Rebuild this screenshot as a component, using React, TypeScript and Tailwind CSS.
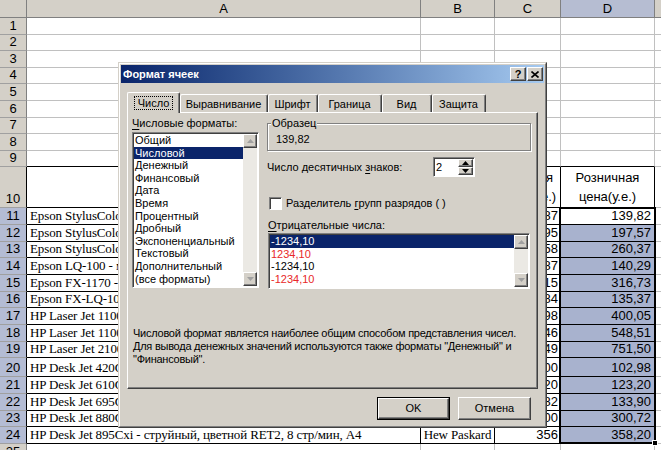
import React from 'react';

type Kind = 'plain' | 'top' | 'head' | 'data';

interface Row {
  n: string;
  h: string;
  kind: Kind;
  a?: string;
  b?: string;
  c?: string;
  d?: string;
}

const rows: Row[] = [
  { n: '1', h: 'h-[17px]', kind: 'plain' },
  { n: '2', h: 'h-[16px]', kind: 'plain' },
  { n: '3', h: 'h-[17px]', kind: 'plain' },
  { n: '4', h: 'h-[16px]', kind: 'plain' },
  { n: '5', h: 'h-[17px]', kind: 'plain' },
  { n: '6', h: 'h-[17px]', kind: 'plain' },
  { n: '7', h: 'h-[16px]', kind: 'plain' },
  { n: '8', h: 'h-[17px]', kind: 'plain' },
  { n: '9', h: 'h-[16px]', kind: 'top' },
  { n: '10', h: 'h-[41px]', kind: 'head', a: 'Наименование товара', b: 'Фирма', c: 'Оптовая цена(у.е.)', d: 'Розничная цена(у.е.)' },
  { n: '11', h: 'h-[17px]', kind: 'data', a: 'Epson StylusColor 440 - струйный, цветной, A4', b: 'Epson', c: '116,87', d: '139,82' },
  { n: '12', h: 'h-[17px]', kind: 'data', a: 'Epson StylusColor 640 - струйный, цветной, A4', b: 'Epson', c: '164,95', d: '197,57' },
  { n: '13', h: 'h-[16px]', kind: 'data', a: 'Epson StylusColor 740 - струйный, цветной, A4', b: 'Epson', c: '216,58', d: '260,37' },
  { n: '14', h: 'h-[17px]', kind: 'data', a: 'Epson LQ-100 - матричный, 24 иглы, A4', b: 'Epson', c: '116,87', d: '140,29' },
  { n: '15', h: 'h-[17px]', kind: 'data', a: 'Epson FX-1170 - матричный, 9 игл, A3', b: 'Epson', c: '263,15', d: '316,73' },
  { n: '16', h: 'h-[16px]', kind: 'data', a: 'Epson FX-LQ-100 - матричный, A4', b: 'Epson', c: '112,84', d: '135,37' },
  { n: '17', h: 'h-[17px]', kind: 'data', a: 'HP Laser Jet 1100 - лазерный, 8 стр/мин, A4', b: 'Hew Paskard', c: '333,98', d: '400,05' },
  { n: '18', h: 'h-[17px]', kind: 'data', a: 'HP Laser Jet 1100A - лазерный, 8 стр/мин, A4', b: 'Hew Paskard', c: '456,46', d: '548,51' },
  { n: '19', h: 'h-[16px]', kind: 'data', a: 'HP Laser Jet 2100 - лазерный, 10 стр/мин, A4', b: 'Hew Paskard', c: '624,49', d: '751,50' },
  { n: '20', h: 'h-[19px]', kind: 'data', a: 'HP Desk Jet 420C - струйный, цветной, A4', b: 'Hew Paskard', c: '85,00', d: '102,98' },
  { n: '21', h: 'h-[17px]', kind: 'data', a: 'HP Desk Jet 610C - струйный, цветной, A4', b: 'Hew Paskard', c: '102,20', d: '123,20' },
  { n: '22', h: 'h-[17px]', kind: 'data', a: 'HP Desk Jet 695C - струйный, цветной, A4', b: 'Hew Paskard', c: '111,82', d: '133,90' },
  { n: '23', h: 'h-[16px]', kind: 'data', a: 'HP Desk Jet 880C - струйный, цветной, A4', b: 'Hew Paskard', c: '249,00', d: '300,72' },
  { n: '24', h: 'h-[17px]', kind: 'data', a: 'HP Desk Jet 895Cxi - струйный, цветной RET2, 8 стр/мин, A4', b: 'Hew Paskard', c: '356', d: '358,20' },
  { n: '25', h: 'h-[17px]', kind: 'plain' },
];

const FORMATS = [
  'Общий',
  'Числовой',
  'Денежный',
  'Финансовый',
  'Дата',
  'Время',
  'Процентный',
  'Дробный',
  'Экспоненциальный',
  'Текстовый',
  'Дополнительный',
  '(все форматы)',
];

const NEGATIVES = [
  { text: '-1234,10', cls: 'bg-[#0a246a] text-white' },
  { text: '1234,10', cls: 'text-[#e82828]' },
  { text: '-1234,10', cls: 'text-black' },
  { text: '-1234,10', cls: 'text-[#e82828]' },
];

const TABS = [
  { label: 'Выравнивание', w: 'w-[88px]' },
  { label: 'Шрифт', w: 'w-[50px]' },
  { label: 'Граница', w: 'w-[64px]' },
  { label: 'Вид', w: 'w-[50px]' },
  { label: 'Защита', w: 'w-[54px]' },
];

const raised =
  'border border-t-white border-l-white border-r-[#404040] border-b-[#404040] shadow-[inset_-1px_-1px_0_#808080] bg-[#d4d0c8]';
const sunken =
  'border border-t-[#808080] border-l-[#808080] border-r-white border-b-white shadow-[inset_1px_1px_0_#404040]';

function SheetRow({ row }: { row: Row }) {
  const table = row.kind === 'head' || row.kind === 'data';
  const line = table
    ? 'border-r border-b border-black'
    : row.kind === 'top'
      ? 'border-r border-b border-r-[#c0c0c0] border-b-black'
      : 'border-r border-b border-[#c0c0c0]';
  const selected = row.kind === 'data';
  const active = row.n === '11';

  return (
    <div className={`flex shrink-0 ${row.h}`}>
      <div
        className={`flex w-[27px] shrink-0 items-end justify-center border-r border-b border-b-[#a0a0a0] text-[13px] leading-[16px] ${
          table ? 'border-r-black' : 'border-r-[#808080]'
        } ${selected ? 'bg-[#b4bcd4]' : 'bg-[#d4d0c8]'}`}
      >
        {row.n}
      </div>

      {row.kind === 'head' ? (
        <>
          <div className={`flex w-[394px] shrink-0 items-center justify-center text-center text-[13px] leading-[19px] ${line}`}>
            {row.a}
          </div>
          <div className={`flex w-[74px] shrink-0 items-center justify-center text-center text-[13px] leading-[19px] ${line}`}>
            {row.b}
          </div>
          <div className={`flex w-[66px] shrink-0 items-center justify-center text-center text-[13px] leading-[19px] ${line}`}>
            {row.c}
          </div>
          <div className={`flex w-[94px] shrink-0 items-center justify-center text-center text-[13px] leading-[19px] ${line}`}>
            {row.d}
          </div>
        </>
      ) : (
        <>
          <div
            className={`flex w-[394px] shrink-0 items-end overflow-hidden whitespace-nowrap pl-[3px] font-['Liberation_Serif','Times_New_Roman',serif] text-[13px] leading-[16px] tracking-[-0.12px] ${line}`}
          >
            {row.a}
          </div>
          <div
            className={`flex w-[74px] shrink-0 items-end justify-center overflow-hidden whitespace-nowrap font-['Liberation_Serif','Times_New_Roman',serif] text-[13px] leading-[16px] tracking-[-0.12px] ${line}`}
          >
            {row.b}
          </div>
          <div className={`flex w-[66px] shrink-0 items-end justify-end pr-[2px] text-[13px] leading-[16px] ${line}`}>
            {row.c}
          </div>
          <div
            className={`flex w-[94px] shrink-0 items-end justify-end pr-[3px] text-[13px] leading-[16px] ${line} ${
              selected && !active ? 'bg-[#a8b2ce]' : ''
            }`}
          >
            {row.d}
          </div>
        </>
      )}
      <div className="flex-1 border-b border-[#c0c0c0]" />
    </div>
  );
}

function Sheet() {
  return (
    <div className="flex flex-col">
      <div className="flex h-[18px] shrink-0 text-[13px] leading-[17px]">
        <div className="w-[27px] shrink-0 border-r border-b border-[#808080] bg-[#d4d0c8]" />
        <div className="w-[394px] shrink-0 border-r border-b border-[#808080] bg-[#d4d0c8] text-center">A</div>
        <div className="w-[74px] shrink-0 border-r border-b border-[#808080] bg-[#d4d0c8] text-center">B</div>
        <div className="w-[66px] shrink-0 border-r border-b border-[#808080] bg-[#d4d0c8] text-center">C</div>
        <div className="w-[94px] shrink-0 border-r border-b border-[#808080] bg-[#b6bdd2] text-center">D</div>
        <div className="flex-1 border-b border-[#808080] bg-[#d4d0c8]" />
      </div>
      {rows.map((r) => (
        <SheetRow key={r.n} row={r} />
      ))}
    </div>
  );
}

function Arrow({ down, color }: { down?: boolean; color: string }) {
  return (
    <svg width="7" height="4" viewBox="0 0 7 4">
      <polygon points={down ? '0,0 7,0 3.5,4' : '0,4 7,4 3.5,0'} fill={color} />
    </svg>
  );
}

function ScrollBar() {
  return (
    <div className="flex w-[14px] shrink-0 flex-col">
      <div className={`flex h-[14px] shrink-0 items-center justify-center ${raised}`}>
        <Arrow color="#a0a0a0" />
      </div>
      <div className="flex-1 bg-[#ebe9e4]" />
      <div className={`flex h-[14px] shrink-0 items-center justify-center ${raised}`}>
        <Arrow down color="#a0a0a0" />
      </div>
    </div>
  );
}

function TitleBar() {
  return (
    <div className="flex h-[18px] shrink-0 items-center bg-gradient-to-r from-[#0a246a] to-[#a6caf0] pl-[2px] pr-[1px]">
      <span className="flex-1 font-bold text-white">Формат ячеек</span>
      <div className="flex gap-[1px]">
        <div className={`flex h-[14px] w-[16px] items-center justify-center text-[11px] font-bold leading-none ${raised}`}>
          ?
        </div>
        <div className={`flex h-[14px] w-[16px] items-center justify-center ${raised}`}>
          <svg width="8" height="7" viewBox="0 0 8 7">
            <path d="M0.5 0.5 L7.5 6.5 M7.5 0.5 L0.5 6.5" stroke="#000" strokeWidth="1.6" />
          </svg>
        </div>
      </div>
    </div>
  );
}

function Tabs() {
  return (
    <div className="ml-[6px] mt-[9px] flex h-[20px] shrink-0 items-end">
      <div className="relative z-10 -mb-px flex h-[21px] w-[53px] items-start justify-center rounded-t-[2px] border-t border-l border-r border-t-white border-l-white border-r-[#404040] bg-[#d4d0c8] pt-[3px] shadow-[inset_-1px_0_0_#808080]">
        <span className="border border-dotted border-black px-[3px] leading-[12px]">Число</span>
      </div>
      {TABS.map((t) => (
        <div
          key={t.label}
          className={`flex h-[18px] ${t.w} shrink-0 items-start justify-center rounded-t-[2px] border-t border-r border-t-white border-r-[#404040] bg-[#d4d0c8] pt-[3px] shadow-[inset_-1px_0_0_#808080,inset_1px_0_0_white]`}
        >
          {t.label}
        </div>
      ))}
    </div>
  );
}

function Panel() {
  return (
    <div className="ml-[6px] flex h-[277px] w-[411px] shrink-0 flex-col border border-t-white border-l-white border-r-[#404040] border-b-[#404040] pl-[4px] pt-[4px] shadow-[inset_-1px_-1px_0_#808080]">
      <div className="flex">
        {/* format list */}
        <div className="flex w-[127px] shrink-0 flex-col">
          <div className="h-[15px]">
            <u className="underline-offset-2">Ч</u>исловые форматы:
          </div>
          <div className={`h-[156px] ${sunken} bg-white p-px`}>
            <div className="flex h-full">
              <div className="flex flex-1 flex-col">
                {FORMATS.map((f, i) => (
                  <div
                    key={f}
                    className={`h-[12.6px] whitespace-nowrap pl-[1px] leading-[12.6px] ${
                      i === 1 ? 'bg-[#0a246a] text-white' : ''
                    }`}
                  >
                    {f}
                  </div>
                ))}
              </div>
              <ScrollBar />
            </div>
          </div>
        </div>

        {/* right side */}
        <div className="ml-[8px] flex w-[264px] shrink-0 flex-col">
          <div className="mt-[6px] h-[28px] border border-[#808080] pl-[3px] shadow-[inset_1px_1px_0_white,1px_1px_0_white]">
            <div className="-mt-[7px] w-fit bg-[#d4d0c8] px-[1px]">Образец</div>
            <div className="mt-[3px] pl-[5px]">139,82</div>
          </div>

          <div className="mt-[6px] flex h-[20px] items-center">
            <div className="w-[166px] shrink-0">
              Число десятичных <u className="underline-offset-2">з</u>наков:
            </div>
            <div className={`flex h-[20px] w-[42px] shrink-0 bg-white ${sunken} p-px`}>
              <div className="flex-1 pl-[1px] leading-[16px]">2</div>
              <div className="flex w-[15px] flex-col">
                <div className={`flex h-[8px] items-center justify-center ${raised}`}>
                  <Arrow color="#000" />
                </div>
                <div className={`flex h-[8px] items-center justify-center ${raised}`}>
                  <Arrow down color="#000" />
                </div>
              </div>
            </div>
          </div>

          <div className="mt-[20px] flex h-[13px] items-center">
            <div className={`ml-[2px] h-[13px] w-[13px] shrink-0 bg-white ${sunken}`} />
            <div className="ml-[4px]">
              Разделитель <u className="underline-offset-2">г</u>рупп разрядов ( )
            </div>
          </div>

          <div className="ml-[1px] mt-[9px] h-[13px]">
            <u className="underline-offset-2">О</u>трицательные числа:
          </div>

          <div className={`ml-[1px] mt-[1px] h-[56px] w-[262px] ${sunken} bg-white p-px`}>
            <div className="flex h-full">
              <div className="flex flex-1 flex-col">
                {NEGATIVES.map((n, i) => (
                  <div key={i} className={`h-[12.6px] pl-[1px] leading-[12.6px] ${n.cls}`}>
                    {n.text}
                  </div>
                ))}
              </div>
              <ScrollBar />
            </div>
          </div>
        </div>
      </div>

      <p className="mt-[38px] pl-[1px] leading-[13px] tracking-[-0.25px]">
        Числовой формат является наиболее общим способом представления чисел.
        <br />
        Для вывода денежных значений используются также форматы "Денежный" и
        <br />
        "Финансовый".
      </p>
    </div>
  );
}

function FormatDialog() {
  return (
    <div className="absolute left-[118px] top-[62px] h-[366px] w-[429px] border border-t-[#d4d0c8] border-l-[#d4d0c8] border-r-[#404040] border-b-[#404040] text-[11px] leading-[13px]">
      <div className="flex h-full flex-col border border-t-white border-l-white border-r-[#808080] border-b-[#808080] bg-[#d4d0c8] p-px">
        <TitleBar />
        <Tabs />
        <Panel />
        <div className="mt-[8px] flex justify-end gap-[8px] pr-[13px]">
          <div className="h-[23px] w-[73px] border border-black">
            <div className={`flex h-full items-center justify-center ${raised}`}>OK</div>
          </div>
          <div className={`flex h-[23px] w-[73px] items-center justify-center ${raised}`}>Отмена</div>
        </div>
      </div>
    </div>
  );
}

export default function App() {
  return (
    <div className="relative h-[450px] w-[661px] overflow-hidden bg-white font-['Liberation_Sans',Arial,sans-serif] text-black">
      <Sheet />
      {/* selection frame around D11:D24 */}
      <div className="pointer-events-none absolute left-[559px] top-[207px] h-[237px] w-[97px] border-2 border-black">
        <div className="absolute -bottom-[4px] -right-[4px] h-[6px] w-[6px] border border-white bg-black" />
      </div>
      <FormatDialog />
    </div>
  );
}
